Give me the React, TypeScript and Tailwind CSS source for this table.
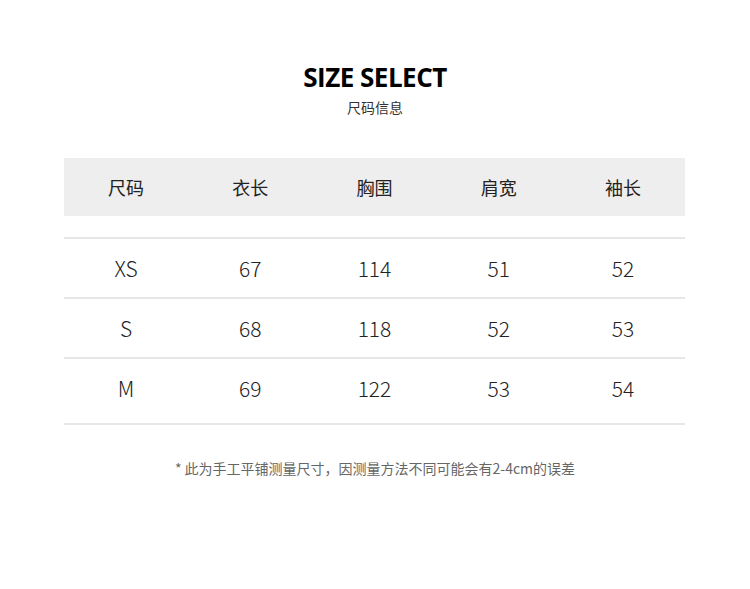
import React from "react";

const headers = ["尺码", "衣长", "胸围", "肩宽", "袖长"];
const rows = [
  ["XS", "67", "114", "51", "52"],
  ["S", "68", "118", "52", "53"],
  ["M", "69", "122", "53", "54"],
];

export default function App() {
  return (
    <div
      className="w-[750px] h-[589px] bg-white flex flex-col items-center"
      style={{ fontFamily: '"Noto Sans CJK SC", "Noto Sans", sans-serif' }}
    >
      <div className="mt-[61px] text-[26px] leading-[32px] font-bold text-black tracking-[-0.5px]" style={{ fontFamily: '"Open Sans", "Noto Sans", sans-serif' }}>
        SIZE SELECT
      </div>
      <div className="mt-[4px] text-[14px] leading-[20px] text-[#333]">尺码信息</div>
      <div className="mt-[41px] w-[621px] ml-[-1px] flex flex-col">
        <div className="h-[58px] bg-[#eeeeee] grid grid-cols-5 items-center">
          {headers.map((h) => (
            <div key={h} className="text-center text-[18px] text-[#222] leading-[24px]">
              {h}
            </div>
          ))}
        </div>
        <div className="h-[21px]" />
        {rows.map((r) => (
          <div
            key={r[0]}
            className="border-t-2 border-[#e6e6e6] grid grid-cols-5 items-center h-[60px]"
          >
            {r.map((c, j) => (
              <div key={j} className="text-center text-[21px] font-light text-[#222] leading-[26px]">
                {c}
              </div>
            ))}
          </div>
        ))}
        <div className="h-[6px]" />
        <div className="border-t-2 border-[#e6e6e6]" />
      </div>
      <div className="mt-[33px] text-[14px] leading-[20px] text-[#666]">
        * 此为手工平铺测量尺寸，因测量方法不同可能会有2-4cm的误差
      </div>
    </div>
  );
}
